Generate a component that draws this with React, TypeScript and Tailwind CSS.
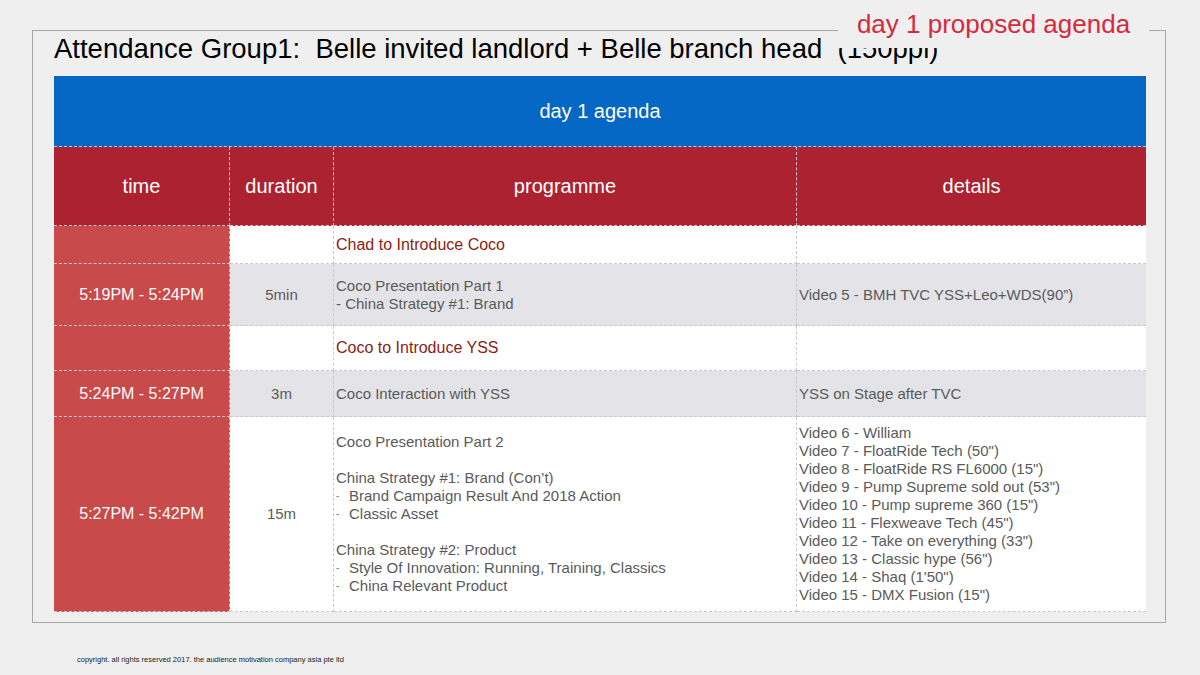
const cell = "border-b border-dashed border-[#c8c8c8] flex items-center";
const sep = "border-r border-dashed border-[#c8c8c8]";
const body = "text-[15px] leading-[18px] text-[#5a5a5a]";

type Row = {
  time?: string;
  duration?: string;
  intro?: string;
  programme?: React.ReactNode;
  details?: React.ReactNode;
  shaded: boolean;
};

const Dash = ({ children }: { children: string }) => (
  <div className="flex">
    <span className="w-[13px] text-[10px] leading-[18px] text-[#777]">-</span>
    <span>{children}</span>
  </div>
);

const videos = [
  "Video 6 - William",
  'Video 7 - FloatRide Tech (50")',
  'Video 8 - FloatRide RS FL6000 (15")',
  'Video 9 - Pump Supreme sold out (53")',
  'Video 10 - Pump supreme 360 (15")',
  'Video 11 - Flexweave Tech (45")',
  'Video 12 - Take on everything (33")',
  'Video 13 - Classic hype (56")',
  "Video 14 - Shaq (1'50\")",
  'Video 15 - DMX Fusion (15")',
];

const rows: Row[] = [
  { intro: "Chad to Introduce Coco", shaded: false },
  {
    time: "5:19PM - 5:24PM",
    duration: "5min",
    programme: (
      <>
        <div>Coco Presentation Part 1</div>
        <div>- China Strategy #1: Brand</div>
      </>
    ),
    details: "Video 5 - BMH TVC YSS+Leo+WDS(90\u201d)",
    shaded: true,
  },
  { intro: "Coco to Introduce YSS", shaded: false },
  {
    time: "5:24PM - 5:27PM",
    duration: "3m",
    programme: "Coco Interaction with YSS",
    details: "YSS on Stage after TVC",
    shaded: true,
  },
  {
    time: "5:27PM - 5:42PM",
    duration: "15m",
    programme: (
      <>
        <div>Coco Presentation Part 2</div>
        <div className="h-[18px]" />
        <div>{"China Strategy #1: Brand (Con\u2019t)"}</div>
        <Dash>Brand Campaign Result And 2018 Action</Dash>
        <Dash>Classic Asset</Dash>
        <div className="h-[18px]" />
        <div>China Strategy #2: Product</div>
        <Dash>Style Of Innovation: Running, Training, Classics</Dash>
        <Dash>China Relevant Product</Dash>
      </>
    ),
    details: (
      <>
        {videos.map((v) => (
          <div key={v}>{v}</div>
        ))}
      </>
    ),
    shaded: false,
  },
];

export default function App() {
  return (
    <div
      className="w-[1200px] h-[675px] bg-[#efefef] overflow-hidden pt-[30px]"
      style={{ fontFamily: '"Liberation Sans", Arial, sans-serif' }}
    >
      <div className="relative ml-[32px] w-[1134px] h-[593px] border border-[#a8a8a8] pl-[21px]">
        <div className="pt-[2px] h-[45px] text-[27.5px] leading-[32px] text-black whitespace-pre">
          Attendance Group1:  Belle invited landlord + Belle branch head  (150ppl)
        </div>

        <div className="absolute top-[-31px] left-[805px] w-[311px] h-[48px] bg-[#efefef] pt-[9px] text-center text-[26px] leading-[30px] text-[#d42a3c]">
          day 1 proposed agenda
        </div>

        <div className="grid grid-cols-[176px_104px_463px_349px] grid-rows-[71px_79px_38px_62px_45px_46px_195px] w-[1092px]">
          <div className={`${cell} col-span-4 justify-center bg-[#0568c4] text-white text-[20px]`}>
            day 1 agenda
          </div>

          {["time", "duration", "programme", "details"].map((h, i) => (
            <div
              key={h}
              className={`${cell} ${i < 3 ? sep : ""} justify-center bg-[#ad2230] text-white text-[20px]`}
            >
              {h}
            </div>
          ))}

          {rows.map((r, i) => {
            const bg = r.shaded ? "bg-[#e4e4e8]" : "bg-white";
            return (
              <div key={i} className="contents">
                <div className={`${cell} ${sep} justify-center bg-[#c84a4a] text-white text-[16px]`}>
                  {r.time}
                </div>
                <div className={`${cell} ${sep} ${bg} justify-center ${body}`}>{r.duration}</div>
                <div className={`${cell} ${sep} ${bg} pl-[2px]`}>
                  {r.intro ? (
                    <span className="text-[16px] text-[#8c1c14]">{r.intro}</span>
                  ) : (
                    <div className={body}>{r.programme}</div>
                  )}
                </div>
                <div className={`${cell} ${bg} pl-[2px]`}>
                  <div className={body}>{r.details}</div>
                </div>
              </div>
            );
          })}
        </div>
      </div>

      <div className="mt-[32px] pl-[77px] text-[7.5px] leading-[10px] text-[#222]">
        copyright. all rights reserved 2017. the audience motivation company asia pte ltd
      </div>
    </div>
  );
}
